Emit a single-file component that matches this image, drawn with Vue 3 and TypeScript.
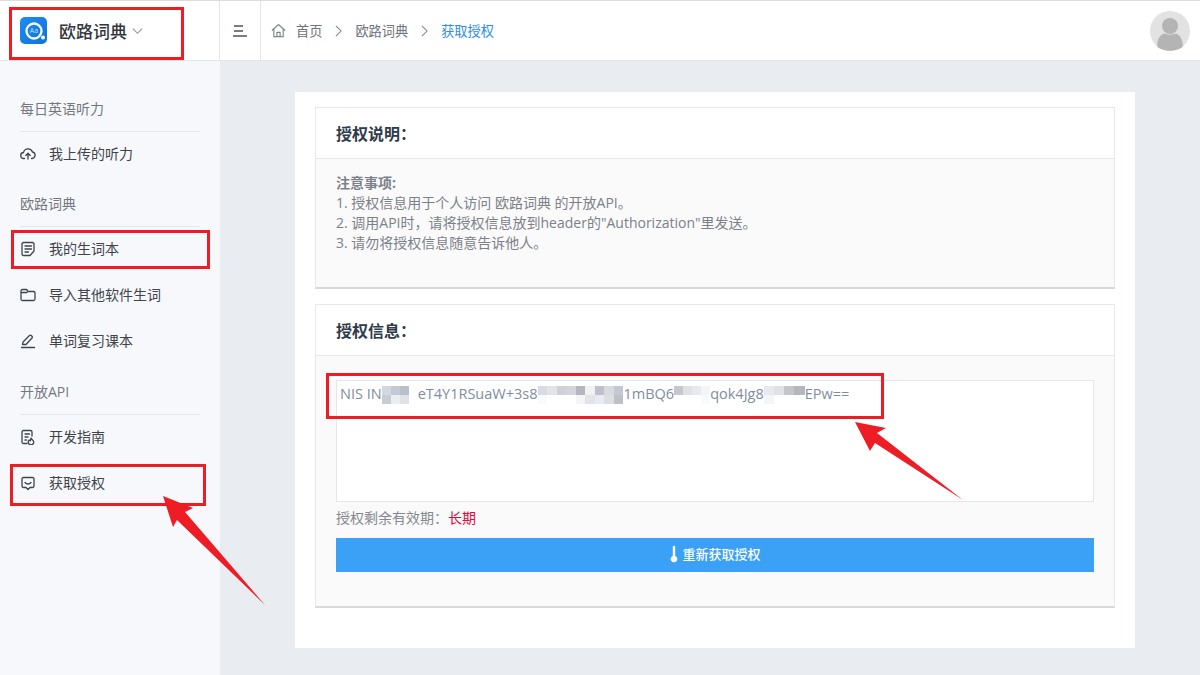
<template>
  <div class="page">
    <header class="topbar">
      <div class="brand">
        <div class="logo">
          <svg class="logo-ring" viewBox="0 0 27 27">
            <circle cx="14" cy="14" r="7.500" fill="none" stroke="#fff" stroke-width="2.300" />
            <circle cx="23" cy="20.500" r="2" fill="#fff" />
          </svg>
          <span class="logo-text">Aa</span>
        </div>
        <span class="brand-name">欧路词典</span>
        <svg class="brand-caret" viewBox="0 0 12 8"><path d="M1 1.500l5 5 5-5" /></svg>
      </div>
      <button class="menu-toggle" type="button">
        <svg viewBox="0 0 16 12"><path d="M2 1h9M2 6h9M1 11h14" /></svg>
      </button>
      <nav class="crumbs">
        <svg class="home-icon" viewBox="0 0 16 16">
          <path d="M1 8l7-6.300L15 8M3 6.600V14.500h10V6.600M6.300 14.500V10h3.400v4.500" />
        </svg>
        <span>首页</span>
        <svg class="crumb-sep" viewBox="0 0 8 14"><path d="M1 1l6 6-6 6" /></svg>
        <span>欧路词典</span>
        <svg class="crumb-sep" viewBox="0 0 8 14"><path d="M1 1l6 6-6 6" /></svg>
        <span class="crumb-current">获取授权</span>
      </nav>
      <div class="avatar">
        <svg viewBox="0 0 40 40">
          <circle cx="20" cy="20" r="20" fill="#e2e2e2" />
          <circle cx="20" cy="15" r="8" fill="#b4b4b4" />
          <path d="M7.500 36c-1-9 4-13 7-13.500 3 1.500 8 1.500 11 0 3 .5 8 4.500 7 13.500-7 5-18 5-25 0z" fill="#b4b4b4" />
        </svg>
      </div>
    </header>

    <div class="body">
      <aside class="sidebar">
        <section v-for="group in menu" :key="group.title" class="menu-group">
          <h4 class="menu-title">{{ group.title }}</h4>
          <a v-for="item in group.items" :key="item.label" class="menu-item">
            <svg class="menu-icon" viewBox="0 0 16 16">
              <path v-for="d in item.paths" :key="d" :d="d" />
            </svg>
            <span>{{ item.label }}</span>
          </a>
        </section>
      </aside>

      <main class="content">
        <div class="card">
          <section class="panel">
            <h3 class="panel-head">授权说明：</h3>
            <div class="panel-body notes">
              <strong>注意事项:</strong>
              <p>1. 授权信息用于个人访问 欧路词典 的开放API。</p>
              <p>2. 调用API时，请将授权信息放到header的"Authorization"里发送。</p>
              <p>3. 请勿将授权信息随意告诉他人。</p>
            </div>
          </section>

          <section class="panel">
            <h3 class="panel-head">授权信息：</h3>
            <div class="panel-body auth">
              <div class="token">
                <template v-for="(part, i) in tokenParts" :key="i">
                  <span v-if="part.text">{{ part.text }}</span>
                  <span v-else class="mosaic" :style="{ width: part.width + 'px' }">
                    <i
                      v-for="(shade, j) in part.cells"
                      :key="j"
                      :style="{ background: shade }"
                    ></i>
                  </span>
                </template>
              </div>
              <div class="expire">授权剩余有效期：<em>长期</em></div>
              <button class="refresh" type="button">
                <svg viewBox="0 0 10 18">
                  <path d="M3.800 2a1.200 1.200 0 0 1 2.400 0v9a3.300 3.300 0 1 1-2.400 0z" />
                </svg>
                重新获取授权
              </button>
            </div>
          </section>
        </div>
      </main>
    </div>

    <!-- screenshot annotations -->
    <div class="mark mark-brand"></div>
    <div class="mark mark-words"></div>
    <div class="mark mark-auth"></div>
    <div class="mark mark-token"></div>
    <svg class="arrows" viewBox="0 0 1200 675">
      <path d="M163 496L193 508 185 512 265 605 177 520 173 527z" />
      <path d="M855 422L886 428 877 433 963 500 875 443 870 451z" />
    </svg>
  </div>
</template>

<script setup lang="ts">
interface MenuItem {
  label: string
  paths: string[]
}
interface MenuGroup {
  title: string
  items: MenuItem[]
}
interface TokenPart {
  text?: string
  cells?: string[]
  width?: number
}

const menu: MenuGroup[] = [
  {
    title: '每日英语听力',
    items: [
      {
        label: '我上传的听力',
        paths: ['M4.500 12.500H4a3 3 0 0 1-.5-6A4.700 4.700 0 0 1 12.500 6a3.300 3.300 0 0 1-.5 6.500h-.5', 'M8 13V7.500M5.800 9.500L8 7.300l2.200 2.200'],
      },
    ],
  },
  {
    title: '欧路词典',
    items: [
      {
        label: '我的生词本',
        paths: ['M3.500 1.500h9a1.500 1.500 0 0 1 1.500 1.500v7l-4 4.500H3.500A1.500 1.500 0 0 1 2 13V3a1.500 1.500 0 0 1 1.500-1.500z', 'M5 5h6.500M5 8h6.500M5 11h3.500'],
      },
      {
        label: '导入其他软件生词',
        paths: ['M2.500 2.500h4l1.500 2h5.500a1.500 1.500 0 0 1 1.500 1.500v6a1.500 1.500 0 0 1-1.500 1.500h-10.500A1.500 1.500 0 0 1 1 12V4a1.500 1.500 0 0 1 1.500-1.500z', 'M1.500 5.500H7'],
      },
      {
        label: '单词复习课本',
        paths: ['M2.500 11.500l.5-2.500 6.500-6.500a1.200 1.200 0 0 1 1.700 0l.8.800a1.200 1.200 0 0 1 0 1.700L6 11.500z', 'M1.500 14.500h13'],
      },
    ],
  },
  {
    title: '开放API',
    items: [
      {
        label: '开发指南',
        paths: ['M7 14.500H3.500A1.500 1.500 0 0 1 2 13V3a1.500 1.500 0 0 1 1.500-1.500h7A1.500 1.500 0 0 1 12 3v4', 'M5 5h4.500M5 8h3M5 11h1.500', 'M11 9c.3 1.500 2.800 2.300 2.800 4a2.800 2.800 0 0 1-5.600 0c0-1 .6-1.500 1-2 .3.500.5.800 1 .8.500-.8.500-1.800.8-2.800z'],
      },
      {
        label: '获取授权',
        paths: ['M3.500 2.500h9A1.500 1.500 0 0 1 14 4v7a1.500 1.500 0 0 1-1.500 1.500H10L8 14.500 6 12.500H3.500A1.500 1.500 0 0 1 2 11V4a1.500 1.500 0 0 1 1.500-1.500z', 'M5 7.500c1.500 2 4.500 2 6 0'],
      },
    ],
  },
]

// pixelated bits of the token: top row and bottom row of each block
function mosaic(width: number, top: string[], bottom: string[]): TokenPart {
  const cells: string[] = []
  top.forEach((shade, i) => {
    cells.push(shade, bottom[i])
  })
  return { cells, width }
}

const tokenParts: TokenPart[] = [
  { text: 'NIS IN' },
  mosaic(36,
    ['#d3d7df', '#c4c9d4', '#b9bfcb', '#ffffff'],
    ['#c9ccd2', '#ebedf1', '#e0e2e7', '#ffffff']),
  { text: 'eT4Y1RSuaW+3s8' },
  mosaic(86,
    ['#d9dbe2', '#e3e4e8', '#cfd1d7', '#d4d5dc', '#b5b5bd', '#f0f2f6', '#bcc0cc', '#d8dae0', '#c3c8d3'],
    ['#fafafa', '#ffffff', '#ffffff', '#ffffff', '#f5f5f5', '#e2e4ea', '#e8ecf2', '#dcdee3', '#bfc0c4']),
  { text: '1mBQ6' },
  mosaic(36,
    ['#c6c7cc', '#dfe1e6', '#e6e9ee', '#f4f5f7'],
    ['#ffffff', '#ffffff', '#ffffff', '#f9fafb']),
  { text: 'qok4Jg8' },
  mosaic(41,
    ['#e8e9ed', '#dfe1e6', '#c4c5cb', '#b5b7bf'],
    ['#f5f5f7', '#ffffff', '#ffffff', '#ffffff']),
  { text: 'EPw==' },
]
</script>

<style scoped>
.page {
  position: relative;
  height: 675px;
  overflow: hidden;
  display: flex;
  flex-direction: column;
  font-family: "Open Sans", "Noto Sans CJK SC", sans-serif;
  font-size: 14px;
  color: #51565e;
  background: #e9edf2;
}
.topbar {
  height: 61px;
  box-sizing: border-box;
  flex: none;
  display: flex;
  align-items: center;
  background: #fff;
  border-top: 1px solid #dcdcdc;
  border-bottom: 1px solid #e4e6ea;
}
.brand {
  width: 220px;
  height: 100%;
  box-sizing: border-box;
  padding-left: 20px;
  display: flex;
  align-items: center;
  border-right: 1px solid #e6e6e6;
}
.logo {
  position: relative;
  width: 27px;
  height: 27px;
  border-radius: 5px;
  background: linear-gradient(135deg, #1c8cf2, #0f73dd);
}
.logo-ring {
  position: absolute;
  inset: 0;
}
.logo-text {
  position: absolute;
  inset: 9px 0 0 1px;
  text-align: center;
  font-size: 7px;
  line-height: 10px;
  color: #bfe0fb;
}
.brand-name {
  margin-left: 12px;
  font-size: 17px;
  font-weight: 500;
  color: #33373d;
}
.brand-caret {
  width: 11px;
  height: 8px;
  margin-left: 5px;
  fill: none;
  stroke: #8f949b;
  stroke-width: 1.200;
}
.menu-toggle {
  width: 41px;
  height: 100%;
  padding: 0;
  background: none;
  border: none;
  border-right: 1px solid #e6e6e6;
  display: flex;
  align-items: center;
  justify-content: center;
}
.menu-toggle svg {
  width: 16px;
  height: 12px;
  fill: none;
  stroke: #4d5259;
  stroke-width: 1.500;
}
.crumbs {
  display: flex;
  align-items: center;
  margin-left: 10px;
  font-size: 13.200px;
  color: #6e7379;
}
.home-icon {
  width: 15px;
  height: 15px;
  margin-right: 10px;
  fill: none;
  stroke: #7e838a;
  stroke-width: 1.200;
}
.crumb-sep {
  width: 7px;
  height: 12px;
  margin: 0 13px;
  fill: none;
  stroke: #7e838a;
  stroke-width: 1.200;
}
.crumb-current {
  color: #2b8df0;
}
.avatar {
  margin-left: auto;
  margin-right: 10px;
  width: 40px;
  height: 40px;
}
.avatar svg {
  display: block;
}
.body {
  flex: 1;
  display: flex;
  min-height: 0;
}
.sidebar {
  width: 220px;
  flex: none;
  box-sizing: border-box;
  padding: 26px 20px 0;
  background: #f7f8fb;
}
.menu-group + .menu-group {
  margin-top: 6px;
}
.menu-group:last-child {
  margin-top: 7px;
}
.menu-title {
  margin: 0;
  height: 44px;
  line-height: 43px;
  font-size: 14px;
  font-weight: 400;
  color: #74787e;
  border-bottom: 1px solid #e5e7eb;
}
.menu-item {
  height: 44px;
  margin-bottom: 2px;
  line-height: 44px;
  display: flex;
  align-items: center;
  color: #3f444b;
}
.menu-icon {
  width: 16px;
  height: 16px;
  margin-right: 13px;
  fill: none;
  stroke: #3f444b;
  stroke-width: 1.300;
  stroke-linejoin: round;
  stroke-linecap: round;
}
.content {
  flex: 1;
  padding: 31px 65px 0 75px;
}
.card {
  box-sizing: border-box;
  height: 556px;
  padding: 15px 20px;
  background: #fff;
  display: flex;
  flex-direction: column;
  gap: 15px;
}
.panel {
  border: 1px solid #e8e8e8;
  border-bottom: 2px solid #d9d9d9;
}
.panel-head {
  margin: 0;
  height: 50px;
  line-height: 52px;
  padding-left: 20px;
  font-size: 16px;
  font-weight: 700;
  color: #2f3b4a;
  border-bottom: 1px solid #e8e8e8;
}
.panel-body {
  background: #fafafa;
  padding: 0 20px;
}
.notes {
  height: 128px;
  box-sizing: border-box;
  padding-top: 14px;
  line-height: 20px;
  color: #7c8189;
}
.notes strong {
  display: block;
  font-weight: 700;
}
.notes p {
  margin: 0;
}
.auth {
  height: 250px;
  box-sizing: border-box;
  padding-top: 24px;
}
.token {
  height: 122px;
  box-sizing: border-box;
  padding: 3px;
  background: #fff;
  border: 1px solid #e6e6e6;
  font-size: 14.500px;
  line-height: 20px;
  color: #7f8da0;
  white-space: nowrap;
}
.mosaic {
  display: inline-grid;
  grid-auto-flow: column;
  grid-template-rows: 9px 9px;
  grid-auto-columns: 1fr;
  height: 18px;
  margin-top: 2px;
  vertical-align: top;
}
.expire {
  margin-top: 6px;
  line-height: 20px;
  color: #85898f;
}
.expire em {
  font-style: normal;
  color: #e6063c;
}
.refresh {
  width: 100%;
  height: 34px;
  margin-top: 10px;
  padding: 0 0 3px;
  border: none;
  background: #3ba1f7;
  color: #fff;
  font: inherit;
  font-size: 13px;
  font-weight: 500;
  display: flex;
  align-items: center;
  justify-content: center;
}
.refresh svg {
  width: 10px;
  height: 18px;
  margin-right: 3px;
  fill: #fff;
}
.mark {
  position: absolute;
  box-sizing: border-box;
  border: 3px solid #ee1c25;
}
.mark-brand {
  left: 9px;
  top: 7px;
  width: 175px;
  height: 53px;
}
.mark-words {
  left: 11px;
  top: 230px;
  width: 199px;
  height: 39px;
}
.mark-auth {
  left: 10px;
  top: 464px;
  width: 196px;
  height: 42px;
}
.mark-token {
  left: 326px;
  top: 373px;
  width: 558px;
  height: 46px;
}
.arrows {
  position: absolute;
  inset: 0;
  width: 1200px;
  height: 675px;
  fill: #ee1c25;
  pointer-events: none;
}
</style>
